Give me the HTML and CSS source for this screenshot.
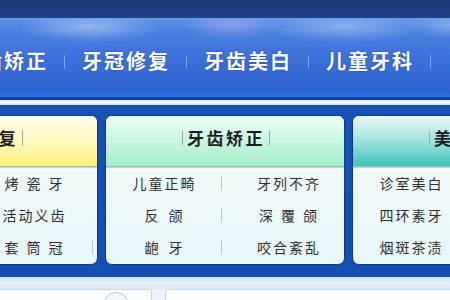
FILE: index.html
```html
<!DOCTYPE html>
<html lang="zh-CN">
<head>
<meta charset="utf-8">
<title>牙科导航</title>
<link rel="stylesheet" href="styles.css">
</head>
<body>
<div class="page">
  <div class="topbar"></div>
  <nav class="nav">
    <ul class="nav-list">
      <li class="nav-item">牙齿矫正</li>
      <li class="nav-sep"></li>
      <li class="nav-item">牙冠修复</li>
      <li class="nav-sep"></li>
      <li class="nav-item">牙齿美白</li>
      <li class="nav-sep"></li>
      <li class="nav-item">儿童牙科</li>
      <li class="nav-sep"></li>
      <li class="nav-item">口腔种植</li>
    </ul>
  </nav>
  <div class="nav-stripe"></div>
  <section class="board">
    <div class="panels">
      <div class="panel panel--first">
        <div class="panel-head head--yellow"><span class="panel-title">牙冠修复</span></div>
        <div class="panel-body">
          <span class="cell">全瓷牙</span><span class="bar"></span><span class="cell cell--r w3">烤瓷牙</span><span class="bar bar--off"></span>
          <span class="cell">固定桥</span><span class="bar"></span><span class="cell cell--r">活动义齿</span><span class="bar bar--off"></span>
          <span class="cell">嵌体冠</span><span class="bar"></span><span class="cell cell--r w3">套筒冠</span><span class="bar"></span>
        </div>
      </div>
      <div class="panel">
        <div class="panel-head head--green"><span class="panel-title">牙齿矫正</span></div>
        <div class="panel-body">
          <span class="cell">儿童正畸</span><span class="bar"></span><span class="cell cell--r">牙列不齐</span>
          <span class="cell w2">反颌</span><span class="bar"></span><span class="cell cell--r w3">深覆颌</span>
          <span class="cell w2">龅牙</span><span class="bar"></span><span class="cell cell--r">咬合紊乱</span>
        </div>
      </div>
      <div class="panel">
        <div class="panel-head head--teal"><span class="panel-title">美白修复</span></div>
        <div class="panel-body">
          <span class="cell">诊室美白</span><span class="bar"></span><span class="cell cell--r">冷光美白</span>
          <span class="cell">四环素牙</span><span class="bar"></span><span class="cell cell--r">瓷贴面</span>
          <span class="cell">烟斑茶渍</span><span class="bar"></span><span class="cell cell--r">氟斑牙</span>
        </div>
      </div>
    </div>
  </section>
  <div class="foot-strip"></div>
  <div class="cards">
    <div class="card card--first"><span class="card-icon"></span></div>
    <div class="card"></div>
  </div>
</div>
</body>
</html>
```

FILE: styles.css
```css
html, body {
  margin: 0;
  padding: 0;
}
body {
  width: 450px;
  height: 300px;
  overflow: hidden;
  font-family: "Noto Sans CJK SC", "Noto Sans", sans-serif;
  background: #eef3f9;
}
.page {
  width: 450px;
  overflow: hidden;
}
.topbar {
  height: 18px;
  background: linear-gradient(#1a3a78, #1e4286);
}
.nav {
  height: 82px;
  box-sizing: border-box;
  border-top: 1px solid #6f9cf0;
  border-bottom: 3px solid #0d3ea6;
  background:
    radial-gradient(ellipse 70px 16px at 90px 8px, rgba(225, 238, 255, 0.45), rgba(225, 238, 255, 0) 100%),
    radial-gradient(ellipse 50px 14px at 232px 6px, rgba(230, 200, 255, 0.35), rgba(230, 200, 255, 0) 100%),
    radial-gradient(ellipse 80px 16px at 345px 8px, rgba(220, 235, 255, 0.4), rgba(220, 235, 255, 0) 100%),
    radial-gradient(ellipse 50px 14px at 455px 6px, rgba(220, 235, 255, 0.35), rgba(220, 235, 255, 0) 100%),
    linear-gradient(#5e8fe8 0px, #4a7ee0 14px, #3c70d8 40px, #3166d2 66px, #2a62d0 72px, #2a74e4 78px);
}
.nav-list {
  list-style: none;
  margin: 0 0 0 -40px;
  padding: 6px 0 0 0;
  height: 100%;
  box-sizing: border-box;
  display: flex;
  align-items: center;
  white-space: nowrap;
}
.nav-item {
  flex: 0 0 auto;
  color: #ffffff;
  font-size: 20px;
  font-weight: 700;
  letter-spacing: 2px;
  line-height: 24px;
  text-shadow: 0 0 2px rgba(20, 50, 140, 0.6);
}
.nav-sep {
  flex: 0 0 1px;
  height: 14px;
  margin: 2px 17px 0 16px;
  background: #8fb2ec;
  opacity: 0.8;
}
.nav-stripe {
  height: 5px;
  background: linear-gradient(#cfe2f8, #ffffff 50%, #cfe0f6);
}
.board {
  background: linear-gradient(#1652b6, #1450b2);
  padding: 10px 0 12px 0;
  overflow: hidden;
}
.panels {
  display: flex;
  gap: 7px;
  margin-left: -142px;
  width: 800px;
}
.panel {
  flex: 0 0 240px;
  height: 150px;
  box-sizing: border-box;
  border: 1px solid #0b3a8c;
  border-radius: 7px;
  overflow: hidden;
  display: flex;
  flex-direction: column;
  background: linear-gradient(#f6fdfd, #e8f7fa);
}
.panel-head {
  height: 51px;
  flex: 0 0 51px;
  box-sizing: border-box;
  padding-bottom: 7px;
  display: flex;
  align-items: center;
  justify-content: center;
  border-bottom: 1px solid #a9b9b4;
  box-shadow: 0 1px 1px rgba(120, 140, 140, 0.35);
}
.head--yellow {
  background: linear-gradient(#fffdeb, #fff8b8 55%, #fff07a);
}
.head--green {
  background: linear-gradient(#ecfdf6, #c9f6e0 50%, #a2efc6);
}
.head--teal {
  background: linear-gradient(#e9f8f8, #9fe2de 50%, #3fc3bb);
}
.panel-title {
  display: flex;
  align-items: center;
  gap: 4px;
  font-size: 17px;
  font-weight: 700;
  color: #1c1c1c;
  letter-spacing: 2.5px;
  padding-left: 2px;
  line-height: 20px;
}
.panel-title::before,
.panel-title::after {
  content: "";
  width: 1px;
  height: 14px;
  background: #9aa8a4;
}
.panel-body {
  flex: 1;
  display: grid;
  grid-template-columns: 115px 1px 1fr;
  grid-template-rows: repeat(3, 1fr);
  align-items: center;
  padding-bottom: 1px;
}
.panel--first .panel-body {
  grid-template-columns: 115px 1px 1fr 1px;
  padding-right: 4px;
}
.cell {
  text-align: center;
  font-size: 14px;
  line-height: 18px;
  color: #2e2e2e;
  letter-spacing: 2px;
  padding-left: 2px;
  white-space: nowrap;
}
.cell--r {
  padding-left: 12px;
}
.panel--first .cell--r {
  padding-left: 2px;
}
.w3 {
  letter-spacing: 8px;
  padding-left: 8px;
}
.cell--r.w3 {
  padding-left: 18px;
}
.panel--first .cell--r.w3 {
  padding-left: 8px;
}
.w2 {
  letter-spacing: 10px;
  padding-left: 10px;
}
.bar {
  width: 1px;
  height: 14px;
  background: #b9c4c4;
}
.bar--off {
  background: transparent;
}
.foot-strip {
  height: 12px;
  background: linear-gradient(#d6e5f7, #e6eefa 50%, #dde8f5);
}
.cards {
  display: flex;
  gap: 13px;
  margin-left: -10px;
}
.card {
  flex: 0 0 300px;
  height: 40px;
  box-sizing: border-box;
  background: #fbfdff;
  border: 1px solid #c9d8e8;
  border-radius: 2px;
}
.card--first {
  flex: 0 0 162px;
  display: flex;
  justify-content: flex-end;
  padding: 2px 22px 0 0;
}
.card-icon {
  width: 26px;
  height: 26px;
  box-sizing: border-box;
  border: 1px solid #b8c4d0;
  border-radius: 50%;
  background: #f4f7fa;
}
```
